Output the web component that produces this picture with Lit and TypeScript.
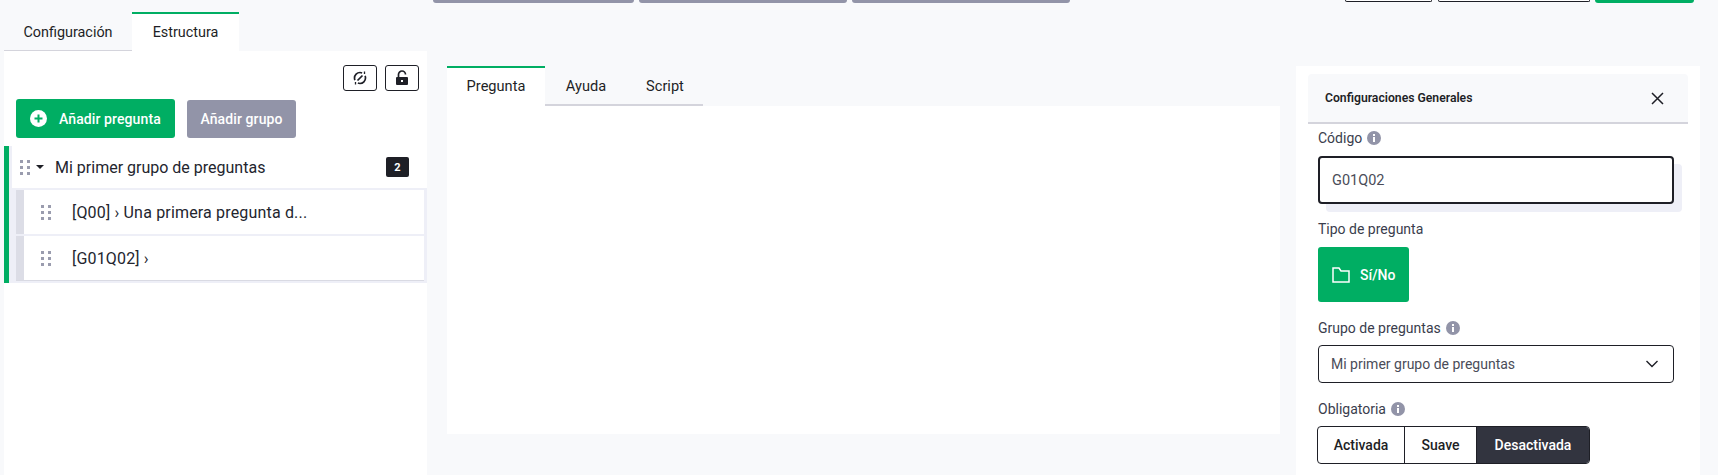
import { LitElement, html, css } from "lit";
import { customElement } from "lit/decorators.js";

const grip = html`<svg class="grip" width="10" height="15" viewBox="0 0 10 15"><g fill="#9a9cae">
<rect x="0" y="0" width="3" height="3"/><rect x="7" y="0" width="3" height="3"/>
<rect x="0" y="6" width="3" height="3"/><rect x="7" y="6" width="3" height="3"/>
<rect x="0" y="12" width="3" height="3"/><rect x="7" y="12" width="3" height="3"/></g></svg>`;

const info = html`<svg class="info" width="14" height="14" viewBox="0 0 14 14"><circle cx="7" cy="7" r="7" fill="#9294a8"/><rect x="6" y="6" width="2" height="5" fill="#fff"/><rect x="6" y="3" width="2" height="2" fill="#fff"/></svg>`;

@customElement("app-root")
export class AppRoot extends LitElement {
  static styles = css`
    :host { display: block; width: 1718px; height: 475px; overflow: hidden; background: #f8f9fb; font-family: Roboto, "Noto Sans", sans-serif; color: #1e1f26; }
    * { box-sizing: border-box; }
    .top { height: 12px; display: flex; padding-left: 433px; }
    .top span { display: block; height: 3px; border-radius: 0 0 4px 4px; }
    .gray { background: #9294a8; margin-right: 5px; }
    .g1 { width: 201px; } .g2 { width: 208px; } .g3 { width: 218px; }
    .out { border: 1px solid #1e1f26; border-top: 0; background: #fff; margin-right: 6px; height: 2px !important; }
    .o1 { width: 87px; margin-left: 270px; } .o2 { width: 152px; margin-right: 5px; }
    .grn { background: #00ae63; width: 99px; }
    .cols { display: grid; grid-template-columns: 423px 833px 400px; column-gap: 20px; padding-left: 4px; height: 463px; }
    .cols > .right { margin-left: -4px; }
    .left { display: flex; flex-direction: column; }
    .tabs { display: flex; height: 40px; font-size: 14.4px; }
    .tab { display: flex; align-items: center; justify-content: center; border-top: 2px solid transparent; border-bottom: 2px solid #d4d4dc; }
    .tab.on { background: #fff; border-top-color: #00ae63; border-bottom-color: #fff; }
    .t-conf { width: 128px; } .t-est { width: 107px; }
    .lpanel { background: #fff; flex: 1; padding-top: 14px; margin-top: -1px; position: relative; }
    .tools { display: flex; justify-content: flex-end; gap: 8px; padding-right: 8px; }
    .tool { width: 34px; height: 26px; border: 1px solid #1e1f26; border-radius: 3px; display: flex; align-items: center; justify-content: center; }
    .acts { display: flex; gap: 12px; padding-left: 12px; margin-top: 8px; align-items: flex-end; }
    .btn { height: 39px; border-radius: 3px; display: flex; align-items: center; color: #fff; font-size: 14px; font-weight: 500; letter-spacing: .1px; }
    .add { width: 159px; background: #00ae63; padding-left: 14px; gap: 12px; }
    .addg { width: 109px; height: 38px; background: #9294a8; justify-content: center; }
    .group { margin-top: 8px; border-left: 5px solid #00ae63; background: #eeeff7; padding-left: 3px; height: 137px; }
    .ghead { height: 42px; background: #fff; display: flex; align-items: center; padding-left: 8px; font-size: 16px; color: #23252e; }
    .caret { width: 0; height: 0; border: 4px solid transparent; border-top: 4px solid #1e1f26; border-bottom: 0; margin: 0 11px 0 6px; }
    .badge { margin-left: auto; margin-right: 18px; width: 23px; height: 20px; background: #1e1f26; color: #fff; border-radius: 2px; font-size: 11px; font-weight: 700; display: flex; align-items: center; justify-content: center; }
    .rows { padding: 2px 3px 0 4px; display: flex; flex-direction: column; gap: 2px; }
    .row { height: 44px; background: #fff; border-left: 8px solid #dcdde6; display: flex; align-items: center; padding-left: 17px; font-size: 16px; letter-spacing: .17px; color: #23252e; }
    .row .grip { margin-right: 21px; }
    .row:last-child { box-shadow: 0 1px 0 #d9dae3; }
    .center { padding-top: 54px; display: flex; flex-direction: column; }
    .ctabs { display: flex; height: 40px; font-size: 14.6px; }
    .ctab { display: flex; align-items: center; justify-content: center; border-top: 2px solid transparent; border-bottom: 2px solid #d4d4dc; height: 40px; }
    .ctab.on { background: #fff; border-top-color: #00ae63; border-bottom-color: #fff; }
    .c1 { width: 98px; } .c2 { width: 82px; } .c3 { width: 76px; }
    .cpanel { background: #fff; height: 328px; }
    .right { padding-top: 54px; }
    .rpanel { background: #fff; height: 409px; padding: 8px 12px 0; }
    .rhead { height: 50px; background: #f8f9fb; border-bottom: 2px solid #d4d4dc; border-radius: 4px 4px 0 0; display: flex; align-items: center; justify-content: space-between; padding: 0 24px 0 17px; font-size: 12.2px; font-weight: 600; color: #1e1f26; }
    .body { padding: 4px 10px 0; }
    .lab { display: flex; align-items: center; gap: 5px; font-size: 14px; color: #3a3d4d; height: 20px; }
    .inputwrap { margin-top: 8px; width: 364px; height: 56px; position: relative; }
    .inputwrap::before { content: ""; position: absolute; left: 8px; top: 8px; right: 0; bottom: 0; background: #eeeff7; border-radius: 4px; }
    .input { position: absolute; left: 0; top: 0; width: 356px; height: 48px; background: #fff; border: 2px solid #1e1f26; border-radius: 4px; display: flex; align-items: center; padding-left: 12px; font-size: 14.5px; color: #4a4c58; }
    .typ { margin-top: 8px; width: 91px; height: 55px; background: #00ae63; border-radius: 3px; color: #fff; display: flex; align-items: center; padding-left: 14px; gap: 10px; font-size: 14px; font-weight: 500; }
    .select { margin-top: 7px; width: 356px; height: 38px; border: 1px solid #1e1f26; border-radius: 4px; display: flex; align-items: center; justify-content: space-between; padding: 0 14px 0 12px; font-size: 14px; color: #4a4c58; }
    .seg { margin: 7px 0 0 -1px; display: flex; width: 273px; height: 38px; border: 1px solid #1e1f26; border-radius: 4px; overflow: hidden; font-size: 14px; font-weight: 500; }
    .seg div { display: flex; align-items: center; justify-content: center; border-right: 1px solid #1e1f26; }
    .seg div:last-child { border-right: 0; background: #32343f; color: #fff; }
    .s1 { width: 87px; } .s2 { width: 72px; } .s3 { flex: 1; }
    .mt7 { margin-top: 7px; } .mt16 { margin-top: 16px; }
  `;

  render() {
    return html`
      <div class="top">
        <span class="gray g1"></span><span class="gray g2"></span><span class="gray g3"></span>
        <span class="out o1"></span><span class="out o2"></span><span class="grn"></span>
      </div>
      <div class="cols">
        <div class="left">
          <div class="tabs"><div class="tab t-conf">Configuración</div><div class="tab t-est on">Estructura</div></div>
          <div class="lpanel">
            <div class="tools">
              <div class="tool"><svg width="16" height="16" viewBox="0 0 16 16" fill="none" stroke="#1e1f26" stroke-width="1.700"><circle cx="8" cy="8" r="5.500" pathLength="100" stroke-dasharray="38 12" stroke-dashoffset="6.500"/><path d="M5.500 10.500l5-5"/><path d="M12.500 1.500v2.500M3.500 12v2.500" stroke-width="1.300"/></svg></div>
              <div class="tool"><svg width="14" height="16" viewBox="0 0 14 16"><path d="M3.500 7V4.500a3.500 3.500 0 0 1 7 0" fill="none" stroke="#1e1f26" stroke-width="1.700"/><rect x="1" y="7" width="12" height="8" rx="1" fill="#1e1f26"/><rect x="6" y="10" width="2" height="2" fill="#fff"/></svg></div>
            </div>
            <div class="acts">
              <div class="btn add"><svg width="17" height="17" viewBox="0 0 17 17"><circle cx="8.500" cy="8.500" r="8.500" fill="#fff"/><path d="M8.500 4.500v8M4.500 8.500h8" stroke="#00ae63" stroke-width="2"/></svg>Añadir pregunta</div>
              <div class="btn addg">Añadir grupo</div>
            </div>
            <div class="group">
              <div class="ghead">${grip}<span class="caret"></span>Mi primer grupo de preguntas<span class="badge">2</span></div>
              <div class="rows">
                <div class="row">${grip}[Q00] › Una primera pregunta d...</div>
                <div class="row">${grip}[G01Q02] ›</div>
              </div>
            </div>
          </div>
        </div>
        <div class="center">
          <div class="ctabs"><div class="ctab c1 on">Pregunta</div><div class="ctab c2">Ayuda</div><div class="ctab c3">Script</div></div>
          <div class="cpanel"></div>
        </div>
        <div class="right">
          <div class="rpanel">
            <div class="rhead">Configuraciones Generales<svg width="13" height="13" viewBox="0 0 13 13"><path d="M1 1l11 11M12 1L1 12" stroke="#1e1f26" stroke-width="1.500"/></svg></div>
            <div class="body">
              <div class="lab">Código ${info}</div>
              <div class="inputwrap"><div class="input">G01Q02</div></div>
              <div class="lab mt7">Tipo de pregunta</div>
              <div class="typ"><svg width="18" height="16" viewBox="0 0 18 16" fill="none" stroke="#fff" stroke-width="1.500"><path d="M1 15V1h6l2 3h8v11z"/></svg>Sí/No</div>
              <div class="lab mt16">Grupo de preguntas ${info}</div>
              <div class="select">Mi primer grupo de preguntas<svg width="14" height="8" viewBox="0 0 14 8" fill="none" stroke="#1e1f26" stroke-width="1.400"><path d="M1.500 1l5.500 5.500L12.500 1"/></svg></div>
              <div class="lab mt16">Obligatoria ${info}</div>
              <div class="seg"><div class="s1">Activada</div><div class="s2">Suave</div><div class="s3">Desactivada</div></div>
            </div>
          </div>
        </div>
      </div>
    `;
  }
}
